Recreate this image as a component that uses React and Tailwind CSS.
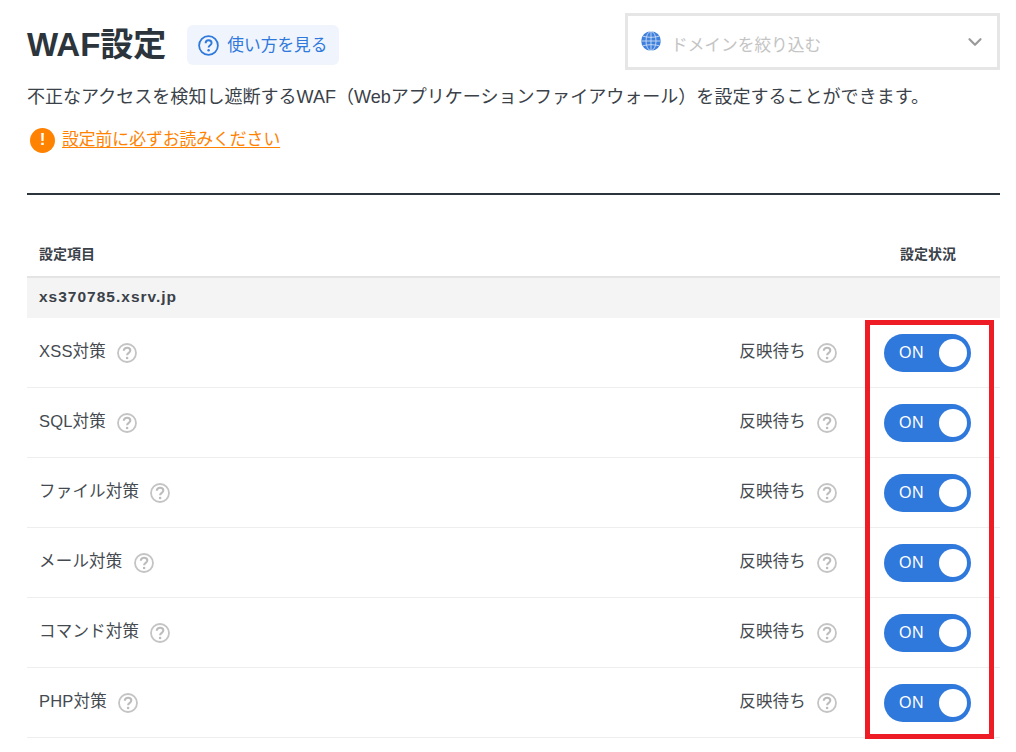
import React from "react";
import { ChevronDown } from "lucide-react";

const font = "font-['Liberation_Sans','Noto_Sans_CJK_JP',sans-serif]";

const items = ["XSS対策", "SQL対策", "ファイル対策", "メール対策", "コマンド対策", "PHP対策"];

function HelpIcon() {
  return (
    <svg width="20" height="20" viewBox="0 0 20 20" className="shrink-0">
      <circle cx="10" cy="10" r="9" fill="none" stroke="#c4c4c4" strokeWidth="1.8" />
      <path d="M6.8 7.800c0-1.900 1.400-3 3.300-3 1.800 0 3.200 1 3.200 2.700 0 2.300-3.200 2.400-3.200 4.800" fill="none" stroke="#bcbcbc" strokeWidth="2.100" />
      <circle cx="10.100" cy="15" r="1.300" fill="#bcbcbc" />
    </svg>
  );
}

function GlobeIcon() {
  return (
    <svg width="20" height="20" viewBox="0 0 20 20" className="shrink-0">
      <circle cx="10" cy="10" r="9.8" fill="#3f80dc" />
      <g fill="none" stroke="#fff" strokeWidth="0.8" opacity="0.8">
        <ellipse cx="10" cy="10" rx="5" ry="9.6" />
        <path d="M10 0.4v19.2M0.4 10h19.2M1.8 5.2c5 1.5 11.400 1.500 16.400 0M1.800 14.800c5-1.500 11.400-1.500 16.400 0" />
      </g>
    </svg>
  );
}

function Toggle() {
  return (
    <div className="flex h-[38px] w-[87px] items-center justify-between rounded-full bg-[#2f78dc] pl-[15px] pr-[4px]">
      <span className="text-[16px] tracking-[0.5px] text-white">ON</span>
      <span className="h-7 w-7 rounded-full bg-white" />
    </div>
  );
}

function Row({ name }) {
  return (
    <div className="flex h-[70px] items-center border-b border-[#eeeeee] pl-[12px] pr-[29px] text-[#444a50]">
      <span className="-mt-[2px] text-[16.5px] tracking-[0.2px]">{name}</span>
      <span className="ml-[11px]"><HelpIcon /></span>
      <span className="-mt-[2px] ml-auto text-[16.5px] tracking-[0.2px]">反映待ち</span>
      <span className="ml-[11px] mr-[47px]"><HelpIcon /></span>
      <Toggle />
    </div>
  );
}

export default function App() {
  return (
    <div className={`${font} relative h-[752px] w-[1016px] overflow-hidden bg-white pl-[27px] pr-4 pt-[13px]`}>
      {/* header */}
      <div className="flex h-[57px] items-start">
        <h1 className="mt-[10px] text-[33px] font-bold leading-[44px] text-[#2c343c]">WAF設定</h1>
        <a className="ml-[21px] mt-3 flex h-10 w-[152px] items-center rounded-md bg-[#f0f5fd] pl-[11px] text-[16.7px] text-[#2f78dc]">
          <svg width="21" height="21" viewBox="0 0 21 21" className="mr-[8px] shrink-0">
            <circle cx="10.5" cy="10.5" r="9.4" fill="none" stroke="#2f78dc" strokeWidth="1.8" />
            <path d="M7.6 8.2c0-1.8 1.2-2.9 3-2.9 1.7 0 3 1 3 2.6 0 2.2-3 2.300-3 4.600" fill="none" stroke="#2f78dc" strokeWidth="1.9" />
            <circle cx="10.6" cy="15.3" r="1.2" fill="#2f78dc" />
          </svg>
          <span className="mt-[1px]">使い方を見る</span>
        </a>
        <div className="ml-auto flex h-[57px] w-[375px] items-center border-[3px] border-[#e6e6e6] pl-[13px] pr-[11px]">
          <span className="-mt-[2px]"><GlobeIcon /></span>
          <span className="ml-[10px] mt-[9px] text-[16.7px] text-[#c4c4c4]">ドメインを絞り込む</span>
          <ChevronDown size={22} strokeWidth={2.4} className="ml-auto text-[#9a9a9a]" />
        </div>
      </div>

      <p className="mt-[14px] text-[18.05px] leading-[26px] text-[#3a4148]">
        不正なアクセスを検知し遮断するWAF（Webアプリケーションファイアウォール）を設定することができます。
      </p>

      <div className="mt-[17px] flex h-[26px] items-center pl-[3px]">
        <span className="flex h-[25px] w-[25px] items-center justify-center rounded-full bg-[#ff8200] text-[17px] font-bold text-white">!</span>
        <a className="ml-[7px] text-[16.8px] text-[#ff8200] underline underline-offset-2">設定前に必ずお読みください</a>
      </div>

      <div className="mt-[40px] h-[2px] bg-[#2c343c]" />

      {/* table */}
      <div className="mt-[49px]">
        <div className="flex h-[34px] items-start justify-between border-b-2 border-[#e4e4e4] pl-[12px] pr-[44px] text-[14px] font-bold leading-[20px] text-[#3a4148]">
          <span>設定項目</span>
          <span>設定状況</span>
        </div>
        <div className="flex h-[40px] items-center bg-[#f4f4f4] pb-[2px] pl-[12px] text-[15.5px] font-bold tracking-[1px] text-[#3a4148]">
          xs370785.xsrv.jp
        </div>
        {items.map((name) => (
          <Row key={name} name={name} />
        ))}
      </div>

      {/* red highlight drawn over the screenshot */}
      <div className="absolute left-[865px] top-[320px] h-[419px] w-[129px] border-[5px] border-[#ee1c25]" />
    </div>
  );
}
